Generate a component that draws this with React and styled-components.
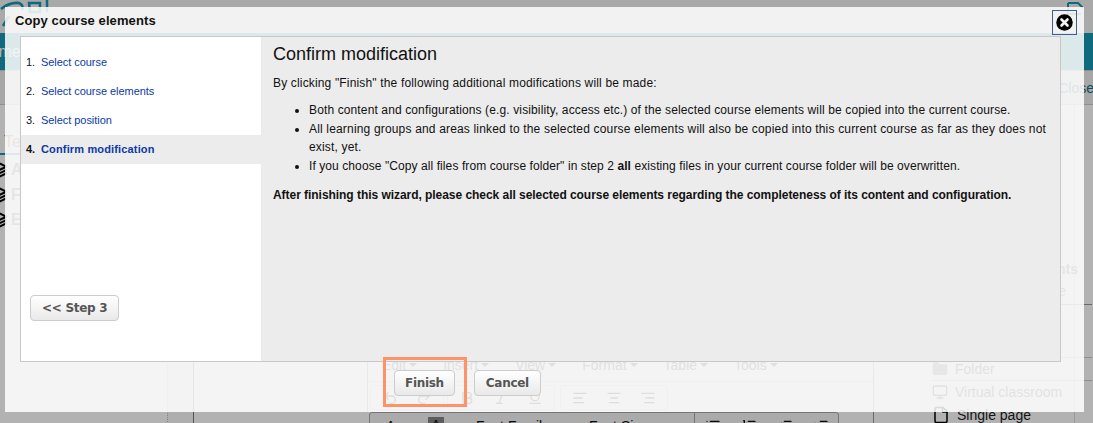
import React from "react";
import styled, { createGlobalStyle } from "styled-components";
import {
  Undo2, Redo2, Bold, Italic, Underline, AlignLeft, AlignCenter, AlignRight,
  List, ListOrdered, Outdent, Indent, Folder, Monitor, File, Layers,
} from "lucide-react";

const Global = createGlobalStyle`
  html, body { margin: 0; padding: 0; background: #fff; }
  body { font-family: "Liberation Sans", Arial, sans-serif; }
  * { box-sizing: border-box; }
`;

const Page = styled.div`
  position: relative;
  width: 1093px;
  height: 423px;
  overflow: hidden;
  background: #fff;
  display: flex;
  flex-direction: column;
`;

const TopBar = styled.div`
  height: 33px;
  flex: none;
  background: #f2f2f2;
  display: flex;
  justify-content: space-between;
  padding-right: 8px;
`;

const Nav = styled.div`
  height: 37px;
  flex: none;
  background: #1599b2;
  color: #fff;
  font-size: 16px;
  line-height: 37px;
  overflow: hidden;
  text-indent: -22px;
`;

const SubBar = styled.div`
  height: 35px;
  flex: none;
  background: #f0f0f0;
  border-top: 1px solid #ccc;
  border-bottom: 1px solid #ccc;
  display: flex;
  justify-content: flex-end;
  align-items: center;
  color: #1a6e80;
  font-size: 14px;
  white-space: nowrap;
`;

const CloseLink = styled.span`
  margin-right: -1px;
`;

const Body = styled.div`
  flex: 1;
  display: grid;
  grid-template-columns: 167px 27px 174px 506px 1fr;
  min-height: 0;
`;

const LeftCol = styled.div`
  background: #fff;
  padding-top: 28px;
  font-size: 16px;
  color: #999;
`;

const LeftTitle = styled.div`
  height: 22px;
  line-height: 18px;
  padding-left: 4px;
  border-bottom: 2px solid #1599b2;
  margin-bottom: 2px;
  color: #c06a3a;
`;

const LeftRow = styled.div`
  height: 25px;
  display: flex;
  align-items: center;
  gap: 4px;
  margin-left: -9px;
  color: #777;
  font-weight: bold;
`;

const Gutter = styled.div`
  background: #fafafa;
  border-left: 1px dotted #bbb;
  border-right: 1px solid #777;
`;

const Spacer = styled.div`
  background: #fff;
`;

const EditorCol = styled.div`
  padding-top: 250px;
  border-right: 1px solid #999;
  background: #fff;
  margin-left: -1px;
  min-width: 0;
`;

const MenuBar = styled.div`
  display: flex;
  gap: 26px;
  height: 27px;
  padding: 1px 0 0 14px;
  color: #444;
  font-size: 14px;
  line-height: 18px;
  border-bottom: 1px solid #ddd;
  border-left: 1px solid #999;
`;

const MenuItem = styled.span`
  display: inline-flex;
  align-items: center;
  align-self: flex-start;
  gap: 3px;
`;

const Caret = styled.i`
  width: 0;
  height: 0;
  border-left: 4px solid transparent;
  border-right: 4px solid transparent;
  border-top: 4px solid #444;
`;

const ToolRow = styled.div`
  display: flex;
  height: 30px;
  padding: 3px 0 2px 2px;
  border-left: 1px solid #999;
`;

const ToolGroup = styled.div`
  display: flex;
  gap: 18px;
  align-items: center;
  padding: 0 11px;
  margin-left: ${(p) => p.$ml}px;
  border: 1px solid #ddd;
  border-radius: 3px;
  color: #333;
`;

const FormatRow = styled.div`
  height: 30px;
  width: 470px;
  margin-left: 2px;
  display: flex;
  background: #f5f5f5;
  border: 1px solid #aaa;
  border-radius: 3px 3px 0 0;
  color: #111;
  font-size: 14px;
  line-height: 16px;
  padding-top: 5px;
  white-space: nowrap;
`;

const FormatGlyph = styled.span`
  width: ${(p) => p.$w}px;
  padding-left: ${(p) => p.$pad || 0}px;
  flex: none;
`;

const DarkGlyph = styled.span`
  width: 16px;
  height: 20px;
  margin-top: -1px;
  background: #868686;
  text-align: center;
  flex: none;
  margin-right: 32px;
`;

const FormatIcons = styled.div`
  display: flex;
  gap: 20px;
  padding: 5px 0 0 10px;
  border-left: 1px solid #aaa;
  height: 30px;
  margin-top: -5px;
`;

const RightCol = styled.div`
  background: #fff;
  padding: 156px 0 0 6px;
  color: #777;
  font-size: 14px;
  white-space: nowrap;
  margin: 0 18px 0 52px;
  border-right: 1px solid #ddd;
`;

const GhostText = styled.div`
  text-align: right;
  height: 22px;
  line-height: 16px;
  margin-right: ${(p) => p.$mr}px;
  font-weight: ${(p) => (p.$bold ? "bold" : "normal")};
`;

const RightGap = styled.div`
  height: 53px;
  margin-right: -18px;
  border-top: ${(p) => (p.$line ? "1px solid #999" : "none")};
  margin-top: -1px;
`;

const ListRow = styled.div`
  height: 23px;
  display: flex;
  align-items: center;
  gap: 7px;
  margin-right: -18px;
  border-top: ${(p) => (p.$line ? "1px solid #ccc" : "none")};
  color: ${(p) => p.$c || "#555"};
`;

const Overlay = styled.div`
  position: absolute;
  inset: 0;
  background: rgba(0, 0, 0, 0.3);
`;

const Modal = styled.div`
  position: absolute;
  left: 5px;
  top: 7px;
  width: 1079px;
  height: 405px;
  background: rgba(255, 255, 255, 0.85);
  display: flex;
  flex-direction: column;
`;

const TitleBar = styled.div`
  position: relative;
  height: 29px;
  flex: none;
  padding: 6px 0 0 10px;
  font-size: 13px;
  line-height: 15px;
  font-weight: bold;
  letter-spacing: 0.1px;
  color: #111;
`;

const CloseButton = styled.button`
  position: absolute;
  left: 1047px;
  top: 3px;
  width: 25px;
  height: 25px;
  padding: 0;
  background: transparent;
  border: 1px solid #3f5f8c;
  display: flex;
  align-items: center;
  justify-content: center;
`;

const Panel = styled.div`
  flex: none;
  width: 1041px;
  height: 326px;
  margin-left: 15px;
  border: 1px solid #c8c8c8;
  display: flex;
`;

const Steps = styled.div`
  width: 240px;
  flex: none;
  background: #fff;
  padding-top: 11px;
  display: flex;
  flex-direction: column;
`;

const StepList = styled.ol`
  list-style: none;
  margin: 0;
  padding: 0;
`;

const Step = styled.li`
  height: 29px;
  display: flex;
  align-items: center;
  padding: 0 0 2px 5px;
  font-size: 11px;
  color: #111;
  font-weight: ${(p) => (p.$active ? "bold" : "normal")};
  background: ${(p) => (p.$active ? "#ececec" : "transparent")};
`;

const StepNum = styled.span`
  width: 15px;
  flex: none;
`;

const StepLink = styled.span`
  color: #0a3aa5;
  letter-spacing: ${(p) => (p.$active ? "0.15px" : "-0.05px")};
`;

const Button = styled.button`
  height: 26px;
  padding: 0 ${(p) => p.$pad}px;
  border: 1px solid #ccc;
  border-radius: 4px;
  background: linear-gradient(#ffffff, #e9e9e9);
  font-family: "DejaVu Sans", Verdana, sans-serif;
  font-size: 12px;
  line-height: 24px;
  font-weight: bold;
  letter-spacing: -0.3px;
  color: #555;
  white-space: nowrap;
`;

const BackButton = styled(Button)`
  align-self: flex-start;
  margin: 131px 0 0 9px;
`;

const Content = styled.div`
  flex: 1;
  background: #ececec;
  padding: 7px 12px 0;
  color: #111;
  font-size: 12px;
`;

const Heading = styled.h3`
  margin: 0;
  font-size: 18px;
  font-weight: normal;
  line-height: 21px;
`;

const Para = styled.p`
  margin: ${(p) => p.$top}px 0 0;
  line-height: 18px;
  font-weight: ${(p) => (p.$bold ? "bold" : "normal")};
  letter-spacing: ${(p) => (p.$bold ? "-0.045px" : "0.16px")};
`;

const Bullets = styled.ul`
  margin: 9px 0 0;
  padding: 0 0 0 36px;
`;

const Bullet = styled.li`
  line-height: 18.6px;
  letter-spacing: ${(p) => p.$ls}px;
`;

const Footer = styled.div`
  display: flex;
  gap: 19px;
  padding: 8px 0 0 389px;
`;

const Highlight = styled.div`
  position: absolute;
  left: 383px;
  top: 357px;
  width: 84px;
  height: 50px;
  border: 3px solid #ff9268;
  pointer-events: none;
`;

const ic = { size: 16, strokeWidth: 2 };

export default function App() {
  return (
    <Page>
      <Global />
      <TopBar>
        <svg width="60" height="33" viewBox="0 0 60 33" fill="none" stroke="#1599b2" strokeWidth="2.5">
          <path d="M1 9 Q10 2 19 3 Q24 5 22 10 M3 26 L9 16 M29 3 H40 V12 H30 Z M47 0 V12" />
        </svg>
        <svg width="18" height="24" viewBox="0 0 18 24" fill="none" stroke="#1599b2" strokeWidth="2">
          <path d="M1 3 H11 L16 8 M1 3 V14 H14" />
        </svg>
      </TopBar>
      <Nav>Home</Nav>
      <SubBar>
        <CloseLink>Close</CloseLink>
      </SubBar>
      <Body>
        <LeftCol>
          <LeftTitle>Test</LeftTitle>
          <LeftRow><Layers size={16} color="#000" strokeWidth={3} />A</LeftRow>
          <LeftRow><Layers size={16} color="#000" strokeWidth={3} />F</LeftRow>
          <LeftRow><Layers size={16} color="#000" strokeWidth={3} />E</LeftRow>
        </LeftCol>
        <Gutter />
        <Spacer />
        <EditorCol>
          <MenuBar>
            <MenuItem>Edit<Caret /></MenuItem>
            <MenuItem>Insert<Caret /></MenuItem>
            <MenuItem>View<Caret /></MenuItem>
            <MenuItem>Format<Caret /></MenuItem>
            <MenuItem>Table<Caret /></MenuItem>
            <MenuItem>Tools<Caret /></MenuItem>
          </MenuBar>
          <ToolRow>
            <ToolGroup $ml={0}><Undo2 {...ic} /><Redo2 {...ic} /></ToolGroup>
            <ToolGroup $ml={3}><Bold {...ic} /><Italic {...ic} /><Underline {...ic} /></ToolGroup>
            <ToolGroup $ml={5}><AlignLeft {...ic} /><AlignCenter {...ic} /><AlignRight {...ic} /></ToolGroup>
          </ToolRow>
          <FormatRow>
            <FormatGlyph $w={58} $pad={16}>A</FormatGlyph>
            <DarkGlyph>A</DarkGlyph>
            <FormatGlyph $w={113}>Font Family</FormatGlyph>
            <FormatGlyph $w={105}>Font Sizes</FormatGlyph>
            <FormatIcons>
              <List {...ic} /><ListOrdered {...ic} /><Outdent {...ic} /><Indent {...ic} />
            </FormatIcons>
          </FormatRow>
        </EditorCol>
        <RightCol>
          <GhostText $bold $mr={-4}>ents</GhostText>
          <GhostText $mr={8}>e</GhostText>
          <RightGap $line />
          <ListRow $line><Folder size={16} fill="#888" stroke="#888" />Folder</ListRow>
          <ListRow $line><Monitor size={16} />Virtual classroom</ListRow>
          <ListRow $c="#222"><File size={18} color="#000" />Single page</ListRow>
        </RightCol>
      </Body>
      <Overlay />
      <Modal>
        <TitleBar>
          Copy course elements
          <CloseButton aria-label="Close">
            <svg width="17" height="17" viewBox="0 0 17 17">
              <circle cx="8.5" cy="8.5" r="8.25" fill="#000" />
              <path d="M5.5 5.5 L11.5 11.5 M11.5 5.5 L5.5 11.5" stroke="#f2f2f2" strokeWidth="2.6" strokeLinecap="round" />
            </svg>
          </CloseButton>
        </TitleBar>
        <Panel>
          <Steps>
            <StepList>
              <Step><StepNum>1.</StepNum><StepLink>Select course</StepLink></Step>
              <Step><StepNum>2.</StepNum><StepLink>Select course elements</StepLink></Step>
              <Step><StepNum>3.</StepNum><StepLink>Select position</StepLink></Step>
              <Step $active><StepNum>4.</StepNum><StepLink $active>Confirm modification</StepLink></Step>
            </StepList>
            <BackButton $pad={11}>&lt;&lt; Step 3</BackButton>
          </Steps>
          <Content>
            <Heading>Confirm modification</Heading>
            <Para $top={9}>By clicking "Finish" the following additional modifications will be made:</Para>
            <Bullets>
              <Bullet $ls={0.125}>Both content and configurations (e.g. visibility, access etc.) of the selected course elements will be copied into the current course.</Bullet>
              <Bullet $ls={0.17}>All learning groups and areas linked to the selected course elements will also be copied into this current course as far as they does not exist, yet.</Bullet>
              <Bullet $ls={0.085}>If you choose "Copy all files from course folder" in step 2 <b>all</b> existing files in your current course folder will be overwritten.</Bullet>
            </Bullets>
            <Para $top={11} $bold>After finishing this wizard, please check all selected course elements regarding the completeness of its content and configuration.</Para>
          </Content>
        </Panel>
        <Footer>
          <Button $pad={10}>Finish</Button>
          <Button $pad={11}>Cancel</Button>
        </Footer>
      </Modal>
      <Highlight />
    </Page>
  );
}
